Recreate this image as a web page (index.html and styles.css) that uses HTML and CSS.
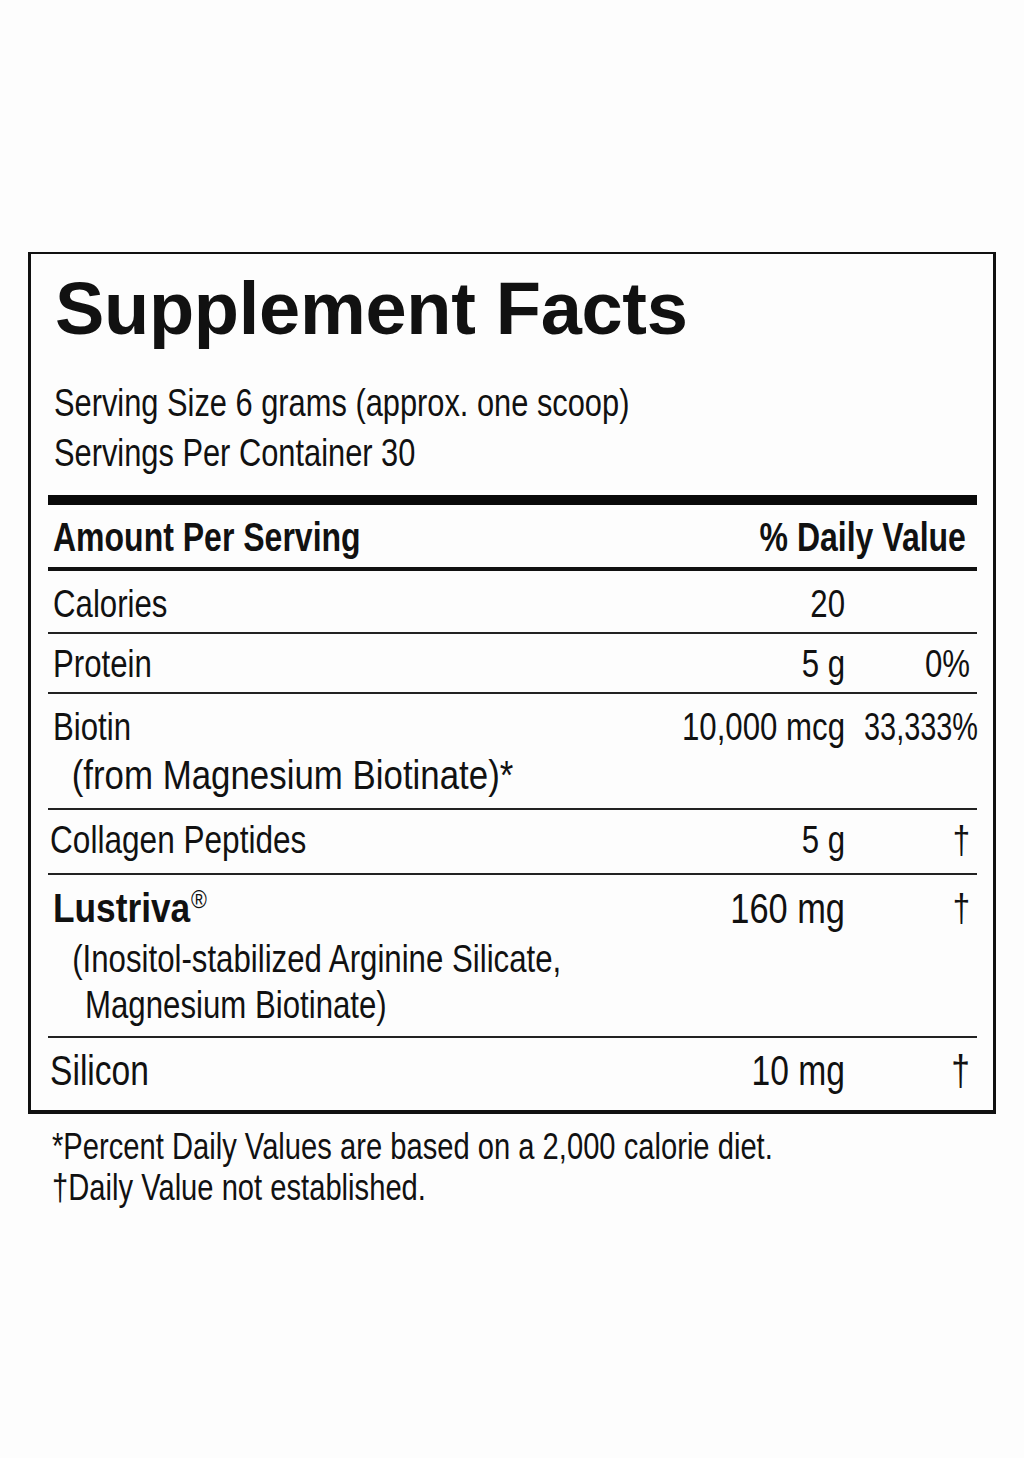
FILE: index.html
```html
<!DOCTYPE html>
<html lang="en">
<head>
<meta charset="utf-8">
<title>Supplement Facts</title>
<link rel="stylesheet" href="styles.css">
</head>
<body>
<main class="page">
  <section class="label">
    <h1 class="title">Supplement Facts</h1>
    <div class="serving">
      <div class="sx">Serving Size 6 grams (approx. one scoop)</div>
      <div class="sx">Servings Per Container 30</div>
    </div>
    <div class="rule-thick"></div>
    <div class="head">
      <span class="sx">Amount Per Serving</span>
      <span class="sx-r">% Daily Value</span>
    </div>
    <div class="row row-cal">
      <div class="name"><div class="sx">Calories</div></div>
      <div class="amt sx-r">20</div>
      <div class="dv"></div>
    </div>
    <div class="row row-pro">
      <div class="name"><div class="sx">Protein</div></div>
      <div class="amt sx-r">5 g</div>
      <div class="dv sx-r">0%</div>
    </div>
    <div class="row row-bio">
      <div class="name">
        <div class="sx">Biotin</div>
        <div class="sub sub-big sx">(from Magnesium Biotinate)*</div>
      </div>
      <div class="amt sx-r">10,000 mcg</div>
      <div class="dv dv-wide sx-r dv-narrow">33,333%</div>
    </div>
    <div class="row row-col">
      <div class="name name-tight"><div class="sx sx-col">Collagen Peptides</div></div>
      <div class="amt sx-r">5 g</div>
      <div class="dv sx-r">†</div>
    </div>
    <div class="row row-lus">
      <div class="name">
        <div class="lus sx-b"><b class="brand">Lustriva</b><span class="reg">®</span></div>
        <div class="sub sub-l sx">(Inositol-stabilized Arginine Silicate,</div>
        <div class="sub sub2 sub-l sx">Magnesium Biotinate)</div>
      </div>
      <div class="amt amt-big sx-r">160 mg</div>
      <div class="dv sx-r">†</div>
    </div>
    <div class="row row-sil">
      <div class="name name-tight"><div class="sx">Silicon</div></div>
      <div class="amt sx-r">10 mg</div>
      <div class="dv sx-r">†</div>
    </div>
  </section>
  <div class="notes">
    <div class="sx">*Percent Daily Values are based on a 2,000 calorie diet.</div>
    <div class="sx">†Daily Value not established.</div>
  </div>
</main>
</body>
</html>
```

FILE: styles.css
```css
html, body {
  margin: 0;
  padding: 0;
  background: #fdfdfd;
}

body {
  color: #111;
  font-family: "Liberation Sans", Arial, sans-serif;
}

/* condensed rendering of the label typeface */
.sx, .sx-r, .sx-b {
  display: block;
  white-space: nowrap;
  transform: scaleX(0.8);
  transform-origin: left center;
}

.sx-r {
  display: flex;
  justify-content: flex-end;
  transform-origin: right center;
}

.sx-b {
  transform: scaleX(0.86);
}

.page {
  padding: 252px 28px 0 28px;
}

.label {
  width: 968px;
  box-sizing: border-box;
  border: 3px solid #111;
  border-top-width: 2px;
  border-bottom-width: 4px;
  padding: 0 16px 0 17px;
}

.title {
  margin: 0;
  padding: 15px 0 0 7px;
  font-weight: 700;
  font-size: 74px;
  line-height: 80px;
  letter-spacing: -0.3px;
}

.serving {
  margin-top: 29px;
  padding-left: 6px;
  font-size: 39px;
  line-height: 50px;
}

.serving .sx {
  transform: scaleX(0.79);
}

.rule-thick {
  margin-top: 17px;
  height: 10px;
  background: #0a0a0a;
}

.head {
  display: flex;
  justify-content: space-between;
  padding: 10px 11px 8px 5px;
  font-weight: 700;
  font-size: 40px;
  line-height: 44px;
  border-bottom: 4px solid #111;
}

.row {
  display: grid;
  grid-template-columns: minmax(0, 1fr) 260px 125px;
  padding: 8px 7px 8px 5px;
  font-size: 39px;
  line-height: 48px;
  border-bottom: 2px solid #222;
}

.row-cal { padding-top: 9px; padding-bottom: 4px; }
.row-pro { padding-top: 6px; padding-bottom: 4px; }
.row-bio { padding-top: 9px; padding-bottom: 9px; }
.row-col { padding-top: 6px; padding-bottom: 9px; }
.row-lus { padding-top: 6px; padding-bottom: 8px; }

.row-sil {
  border-bottom: none;
  padding-top: 9px;
  padding-bottom: 15px;
  font-size: 42px;
}

.name-tight {
  margin-left: -3px;
}

.dv-wide {
  margin-right: -8px;
}

.dv-narrow {
  transform: scaleX(0.74);
}

.sub {
  padding-left: 24px;
}

.sub-big {
  font-size: 41px;
  padding-left: 22px;
  transform: scaleX(0.85);
}

.sx-col {
  transform: scaleX(0.81);
}

.sub2 {
  padding-left: 40px;
}

.row-lus .lus {
  line-height: 54px;
}

.row-lus .sub-l {
  line-height: 46px;
}

.row-lus .amt,
.row-lus .dv {
  line-height: 54px;
}

.brand {
  font-weight: 700;
  font-size: 41px;
}

.reg {
  font-size: 25px;
  line-height: 1;
  vertical-align: 14px;
  margin-left: 1px;
}

.amt-big {
  font-size: 43px;
}

.notes {
  margin-top: 12px;
  padding-left: 24px;
  font-size: 36px;
  line-height: 41px;
}

.notes .sx {
  transform: scaleX(0.81);
}
```
